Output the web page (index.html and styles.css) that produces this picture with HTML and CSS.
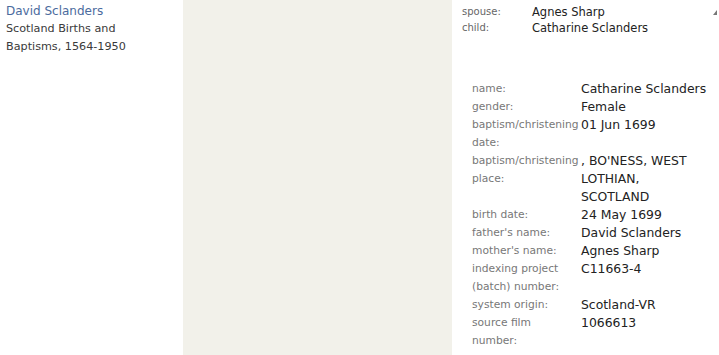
FILE: index.html
```html
<!DOCTYPE html>
<html>
<head>
<meta charset="utf-8">
<link rel="stylesheet" href="styles.css">
</head>
<body>
<div class="page">
  <div class="col-left">
    <a class="name-link" href="#">David Sclanders</a>
    <div class="collection">Scotland Births and Baptisms, 1564-1950</div>
  </div>
  <div class="col-mid"></div>
  <div class="col-right">
    <div class="family">
      <div class="frow"><span class="flabel">spouse:</span><span class="fval">Agnes Sharp</span></div>
      <div class="frow"><span class="flabel">child:</span><span class="fval">Catharine Sclanders</span></div>
    </div>
    <div class="details">
      <div class="drow"><div class="dlabel">name:</div><div class="dval">Catharine Sclanders</div></div>
      <div class="drow"><div class="dlabel">gender:</div><div class="dval">Female</div></div>
      <div class="drow"><div class="dlabel"><span class="nw">baptism/christening</span> date:</div><div class="dval">01 Jun 1699</div></div>
      <div class="drow"><div class="dlabel"><span class="nw">baptism/christening</span> place:</div><div class="dval">, BO'NESS, WEST LOTHIAN, SCOTLAND</div></div>
      <div class="drow"><div class="dlabel">birth date:</div><div class="dval">24 May 1699</div></div>
      <div class="drow"><div class="dlabel">father's name:</div><div class="dval">David Sclanders</div></div>
      <div class="drow"><div class="dlabel">mother's name:</div><div class="dval">Agnes Sharp</div></div>
      <div class="drow"><div class="dlabel">indexing project (batch) number:</div><div class="dval">C11663-4</div></div>
      <div class="drow"><div class="dlabel">system origin:</div><div class="dval">Scotland-VR</div></div>
      <div class="drow"><div class="dlabel">source film number:</div><div class="dval">1066613</div></div>
    </div>
    <div class="scroll-arrow"></div>
  </div>
</div>
</body>
</html>
```
FILE: styles.css
```css
html, body {
  margin: 0;
  padding: 0;
  background: #fff;
}
body {
  font-family: "DejaVu Sans", "Liberation Sans", sans-serif;
  color: #333;
  width: 719px;
  height: 355px;
  overflow: hidden;
}
.page {
  display: flex;
  height: 355px;
}
.col-left {
  width: 177px;
  padding: 2px 0 0 6px;
  font-size: 11.2px;
  line-height: 18px;
}
.name-link {
  display: block;
  color: #4b6b9e;
  text-decoration: none;
  font-size: 12px;
}
.collection {
  color: #3a3a3a;
  width: 140px;
}
.col-mid {
  width: 269px;
  background: #f2f1ea;
}
.col-right {
  flex: 1;
  position: relative;
  padding: 4px 0 0 10px;
}
.frow {
  display: flex;
  line-height: 16px;
}
.flabel {
  width: 70px;
  font-size: 10px;
  color: #666;
}
.fval {
  font-size: 11.5px;
  color: #222;
}
.details {
  padding: 44px 0 0 10px;
}
.drow {
  display: flex;
}
.dlabel {
  width: 102px;
  padding-right: 7px;
  flex-shrink: 0;
  font-size: 10.7px;
  line-height: 18px;
  color: #777;
}
.nw {
  white-space: nowrap;
}
.dval {
  width: 126px;
  font-size: 12.4px;
  line-height: 18px;
  color: #222;
}
.scroll-arrow {
  position: absolute;
  right: 2px;
  top: 10px;
  width: 0;
  height: 0;
  border-left: 4px solid transparent;
  border-bottom: 5px solid #777;
}
```
